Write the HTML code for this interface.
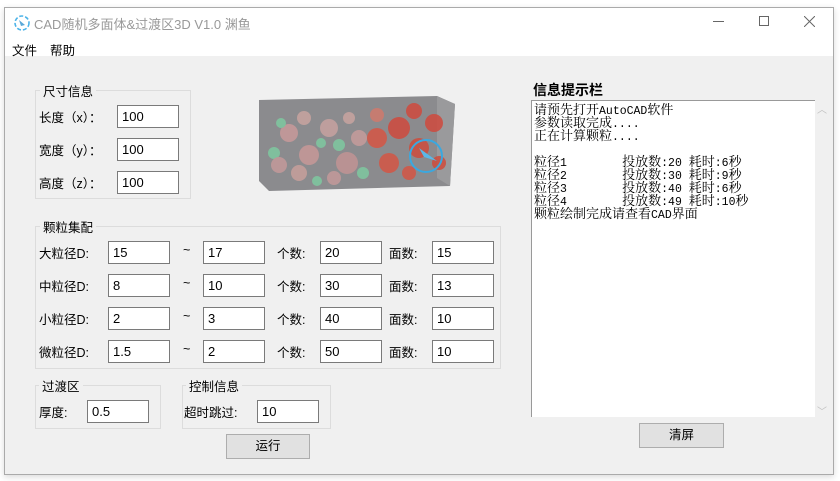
<!DOCTYPE html>
<html><head><meta charset="utf-8"><style>
*{margin:0;padding:0;box-sizing:border-box}
body{width:840px;height:481px;background:#fff;position:relative;overflow:hidden;font-family:"Liberation Sans","Microsoft YaHei","Noto Sans CJK SC",sans-serif;font-size:12px;color:#000}
.a{position:absolute}
.win{left:4px;top:7px;width:830px;height:468px;border:1px solid #aaa;background:#f0f0f0;box-shadow:0 2px 6px rgba(0,0,0,.15)}
.title{left:5px;top:8px;width:828px;height:48px;background:#fff}
.gb{border:1px solid #dcdcdc}
.gl{background:#f0f0f0;padding:0 3px;font-size:12.5px;color:#000}
.in{background:#fff;border:1px solid #7a7a7a;height:23px;padding:3px 4px 0;font-size:13px;font-family:"Liberation Sans",sans-serif}
.lb{font-size:12.5px;margin-top:-2px}
.btn{background:#e1e1e1;border:1px solid #adadad;text-align:center;font-size:12.5px;line-height:22px}
.m{position:absolute;left:534px;height:13px;overflow:visible;font-family:"Noto Serif CJK SC","Noto Sans CJK SC",serif;font-size:13px;line-height:13px;white-space:pre}
.m i{font-style:normal;font-family:"Liberation Mono",monospace;font-size:11.5px;line-height:13px}
</style></head><body>
<div class="a win"></div>
<div class="a title"></div>
<svg class="a" style="left:13px;top:14px" width="18" height="18" viewBox="0 0 18 18"><circle cx="9" cy="9" r="7" fill="none" stroke="#4db3e8" stroke-width="1.6" stroke-dasharray="4 2"/><path d="M6 6 L12 11 L8 12 Z" fill="#5aa8d8"/></svg>
<div class="a" style="left:34px;top:14px;font-size:13px;color:#999">CAD随机多面体&amp;过渡区3D V1.0 渊鱼</div>
<div class="a" style="left:713px;top:21px;width:11px;height:1px;background:#666"></div>
<div class="a" style="left:759px;top:16px;width:10px;height:10px;border:1px solid #666"></div>
<svg class="a" style="left:804px;top:16px" width="11" height="11"><path d="M0 0L11 11M11 0L0 11" stroke="#666" stroke-width="1"/></svg>
<div class="a" style="left:12px;top:40px;font-size:12.5px">文件</div>
<div class="a" style="left:50px;top:40px;font-size:12.5px">帮助</div>

<div class="a gb" style="left:35px;top:90px;width:156px;height:109px"></div>
<div class="a gl" style="left:40px;top:81px">尺寸信息</div>
<div class="a lb" style="left:39px;top:109px">长度（x）：</div>
<div class="a lb" style="left:39px;top:142px">宽度（y）：</div>
<div class="a lb" style="left:39px;top:175px">高度（z）：</div>
<div class="a in" style="left:117px;top:105px;width:62px">100</div>
<div class="a in" style="left:117px;top:138px;width:62px">100</div>
<div class="a in" style="left:117px;top:171px;width:62px">100</div>

<svg class="a" style="left:259px;top:93px" width="196" height="100" viewBox="0 0 196 100">
<polygon points="0,7 178,3 196,11 191,93 10,98 0,88" fill="#8b8b8e"/>
<polygon points="178,3 196,11 191,93 178,85" fill="#9a9a9c"/>
<g opacity=".85">
<circle cx="30" cy="40" r="9" fill="#c99a9a"/><circle cx="50" cy="62" r="10" fill="#c79898"/><circle cx="70" cy="35" r="9" fill="#c7a2a0"/>
<circle cx="88" cy="70" r="11" fill="#c29494"/><circle cx="40" cy="80" r="8" fill="#c8a09c"/><circle cx="15" cy="60" r="6" fill="#7fc9a0"/>
<circle cx="22" cy="30" r="5" fill="#7fc9a0"/><circle cx="62" cy="50" r="5" fill="#7fc9a0"/><circle cx="100" cy="45" r="8" fill="#c69c9c"/>
<circle cx="75" cy="85" r="7" fill="#c49a9a"/><circle cx="58" cy="88" r="5" fill="#7fc9a0"/><circle cx="90" cy="25" r="6" fill="#c9a4a0"/>
<circle cx="20" cy="72" r="8" fill="#c49a9a"/><circle cx="45" cy="25" r="7" fill="#c9a4a0"/><circle cx="80" cy="52" r="6" fill="#7fc9a0"/>
<circle cx="118" cy="45" r="10" fill="#d65545"/><circle cx="140" cy="35" r="11" fill="#d04a3d"/><circle cx="160" cy="55" r="10" fill="#cf4c3c"/>
<circle cx="130" cy="70" r="10" fill="#d45545"/><circle cx="175" cy="30" r="9" fill="#d04a3d"/><circle cx="150" cy="80" r="7" fill="#d45545"/>
<circle cx="118" cy="22" r="7" fill="#d07a6d"/><circle cx="104" cy="80" r="6" fill="#7fc9a0"/><circle cx="155" cy="18" r="8" fill="#d04a3d"/><circle cx="180" cy="70" r="7" fill="#cf4c3c"/>
</g>
<circle cx="167" cy="63" r="16" fill="none" stroke="#3aa8e0" stroke-width="2"/>
<polygon points="160,55 178,68 165,64" fill="#5ab8e8"/>
</svg>

<div class="a gb" style="left:35px;top:226px;width:466px;height:143px"></div>
<div class="a gl" style="left:40px;top:217px">颗粒集配</div>
<div class="a lb" style="left:39px;top:245px">大粒径D:</div>
<div class="a lb" style="left:39px;top:278px">中粒径D:</div>
<div class="a lb" style="left:39px;top:311px">小粒径D:</div>
<div class="a lb" style="left:39px;top:344px">微粒径D:</div>
<div class="a lb" style="left:183px;top:245px">~</div><div class="a lb" style="left:183px;top:278px">~</div><div class="a lb" style="left:183px;top:311px">~</div><div class="a lb" style="left:183px;top:344px">~</div>
<div class="a lb" style="left:277px;top:245px">个数:</div><div class="a lb" style="left:277px;top:278px">个数:</div><div class="a lb" style="left:277px;top:311px">个数:</div><div class="a lb" style="left:277px;top:344px">个数:</div>
<div class="a lb" style="left:389px;top:245px">面数:</div><div class="a lb" style="left:389px;top:278px">面数:</div><div class="a lb" style="left:389px;top:311px">面数:</div><div class="a lb" style="left:389px;top:344px">面数:</div>
<div class="a in" style="left:108px;top:241px;width:62px">15</div><div class="a in" style="left:203px;top:241px;width:62px">17</div><div class="a in" style="left:320px;top:241px;width:62px">20</div><div class="a in" style="left:432px;top:241px;width:62px">15</div>
<div class="a in" style="left:108px;top:274px;width:62px">8</div><div class="a in" style="left:203px;top:274px;width:62px">10</div><div class="a in" style="left:320px;top:274px;width:62px">30</div><div class="a in" style="left:432px;top:274px;width:62px">13</div>
<div class="a in" style="left:108px;top:307px;width:62px">2</div><div class="a in" style="left:203px;top:307px;width:62px">3</div><div class="a in" style="left:320px;top:307px;width:62px">40</div><div class="a in" style="left:432px;top:307px;width:62px">10</div>
<div class="a in" style="left:108px;top:340px;width:62px">1.5</div><div class="a in" style="left:203px;top:340px;width:62px">2</div><div class="a in" style="left:320px;top:340px;width:62px">50</div><div class="a in" style="left:432px;top:340px;width:62px">10</div>

<div class="a gb" style="left:35px;top:385px;width:126px;height:44px"></div>
<div class="a gl" style="left:39px;top:376px">过渡区</div>
<div class="a lb" style="left:39px;top:404px">厚度:</div>
<div class="a in" style="left:87px;top:400px;width:62px">0.5</div>
<div class="a gb" style="left:182px;top:385px;width:149px;height:44px"></div>
<div class="a gl" style="left:186px;top:376px">控制信息</div>
<div class="a lb" style="left:184px;top:404px">超时跳过:</div>
<div class="a in" style="left:257px;top:400px;width:62px">10</div>
<div class="a btn" style="left:226px;top:434px;width:84px;height:25px">运行</div>

<div class="a" style="left:533px;top:80px;font-size:14px;font-weight:bold">信息提示栏</div>
<div class="a" style="left:531px;top:100px;width:284px;height:317px;background:#fff;border-left:1px solid #999;border-top:1px solid #999"></div>
<div class="m" style="top:102px">请预先打开<i>AutoCAD</i>软件</div>
<div class="m" style="top:115px">参数读取完成<i>....</i></div>
<div class="m" style="top:128px">正在计算颗粒<i>....</i></div>
<div class="m" style="top:154px">粒径<i>1        </i>投放数<i>:20 </i>耗时<i>:6</i>秒</div>
<div class="m" style="top:167px">粒径<i>2        </i>投放数<i>:30 </i>耗时<i>:9</i>秒</div>
<div class="m" style="top:180px">粒径<i>3        </i>投放数<i>:40 </i>耗时<i>:6</i>秒</div>
<div class="m" style="top:193px">粒径<i>4        </i>投放数<i>:49 </i>耗时<i>:10</i>秒</div>
<div class="m" style="top:206px">颗粒绘制完成请查看<i>CAD</i>界面</div>
<div class="a" style="left:817px;top:101px;color:#c0c0c0;font-size:10px">︿</div>
<div class="a" style="left:817px;top:403px;color:#c0c0c0;font-size:10px">﹀</div>
<div class="a btn" style="left:639px;top:423px;width:85px;height:25px">清屏</div>
</body></html>
